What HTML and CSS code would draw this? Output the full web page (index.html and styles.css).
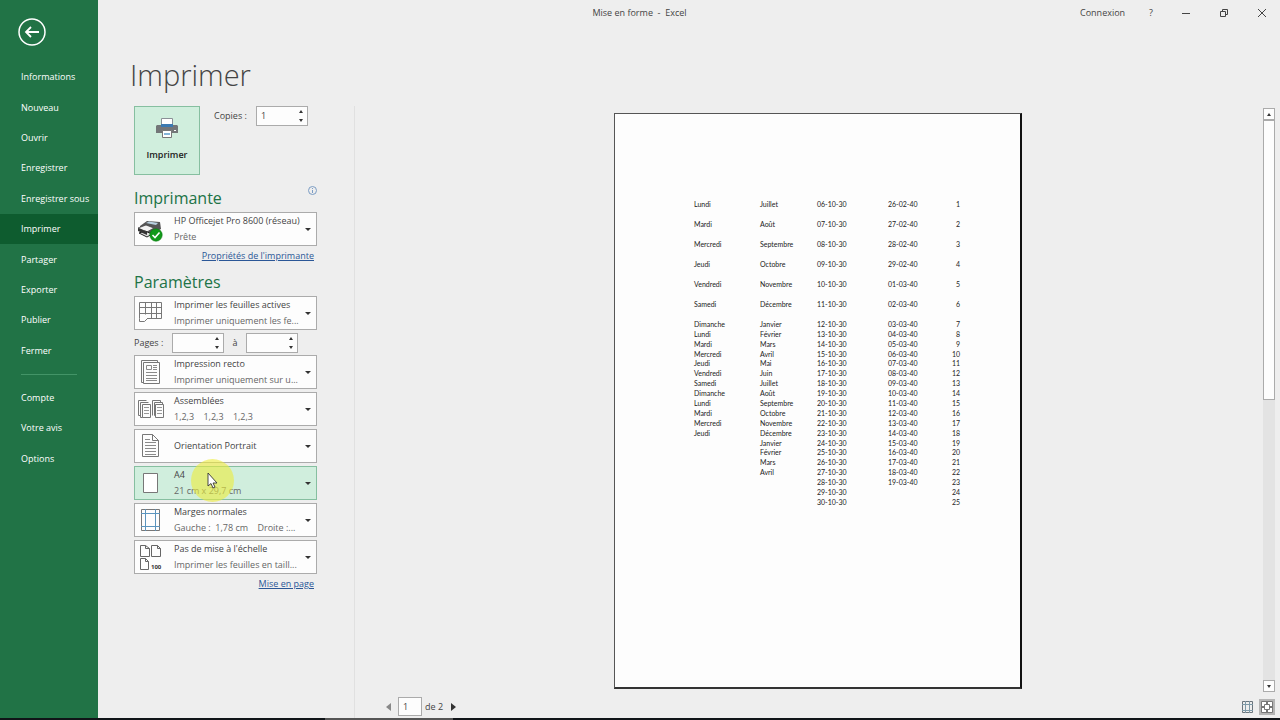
FILE: index.html
```html
<!DOCTYPE html>
<html lang="fr">
<head>
  <meta charset="UTF-8">
  <meta name="viewport" content="width=device-width, initial-scale=1.0">
  <title>Mise en forme - Excel</title>
  <link rel="stylesheet" href="styles.css">
</head>
<body>
  <div class="app">
    <nav class="sidebar">
      <button class="back" aria-label="Retour">
        <svg width="28" height="28" viewBox="0 0 28 28" fill="none" stroke="#fff">
          <circle cx="14" cy="14" r="13" stroke-width="1.5"/>
          <path d="M21 14H8M13 9l-5 5 5 5" stroke-width="1.8"/>
        </svg>
      </button>
      <ul class="menu">
        <li><a href="#">Informations</a></li>
        <li><a href="#">Nouveau</a></li>
        <li><a href="#">Ouvrir</a></li>
        <li><a href="#">Enregistrer</a></li>
        <li><a href="#">Enregistrer sous</a></li>
        <li><a href="#" class="active">Imprimer</a></li>
        <li><a href="#">Partager</a></li>
        <li><a href="#">Exporter</a></li>
        <li><a href="#">Publier</a></li>
        <li><a href="#">Fermer</a></li>
      </ul>
      <hr>
      <ul class="menu menu-bottom">
        <li><a href="#">Compte</a></li>
        <li><a href="#">Votre avis</a></li>
        <li><a href="#">Options</a></li>
      </ul>
    </nav>

    <main>
      <header class="titlebar">
        <span class="doc-title">Mise en forme &nbsp;-&nbsp; Excel</span>
        <div class="window-buttons">
          <button class="login">Connexion</button>
          <button aria-label="Aide">?</button>
          <button aria-label="Réduire">
            <svg width="10" height="10" viewBox="0 0 10 10" stroke="#444"><path d="M1 5.500h8"/></svg>
          </button>
          <button aria-label="Restaurer">
            <svg width="10" height="10" viewBox="0 0 10 10" fill="none" stroke="#444"><path d="M1.500 3.500h5v5h-5zM3.500 3.500v-2h5v5h-2"/></svg>
          </button>
          <button aria-label="Fermer">
            <svg width="10" height="10" viewBox="0 0 10 10" stroke="#444"><path d="M1 1l8 8M9 1l-8 8"/></svg>
          </button>
        </div>
      </header>
      <h1>Imprimer</h1>

      <div class="content">
        <section class="settings">
          <div class="print-row">
            <button class="print">
              <svg width="24" height="22" viewBox="0 0 24 22">
                <path d="M6.500 1.500h11V8h-11z" fill="#fff" stroke="#8a9096"/>
                <path d="M2 8h20l1 1v7H1V9z" fill="#737678"/>
                <path d="M6 7h12v3H6z" fill="#3b79b0"/>
                <path d="M19 13h2v1h-2z" fill="#fff"/>
                <path d="M7.500 13.500h9v7h-9z" fill="#fff" stroke="#777"/>
                <path d="M9 16h6v2H9z" fill="#84b4d8"/>
              </svg>
              <span>Imprimer</span>
            </button>
            <label for="copies">Copies :</label>
            <div class="spinner">
              <input id="copies" type="text" inputmode="numeric" value="1">
              <button class="up" aria-label="Plus"></button>
              <button class="down" aria-label="Moins"></button>
            </div>
          </div>

          <div class="section-head">
            <h2>Imprimante</h2>
            <svg width="9" height="9" viewBox="0 0 9 9" fill="none" stroke="#7b9cc4"><circle cx="4.500" cy="4.500" r="4"/><path d="M4.500 4v3M4.500 2v1"/></svg>
          </div>
          <button class="gallery" aria-haspopup="listbox">
            <svg width="32" height="32" viewBox="0 0 32 32">
              <path d="M5 13l7-5 13 1 1 7-9 5-12-4z" fill="#555"/>
              <path d="M11 10l3-1.500 9 1.500-2 2z" fill="#b8cfdf"/>
              <path d="M3 15l8-3 8 3-7 4z" fill="#f2f2f2" stroke="#444" stroke-width=".8"/>
              <path d="M4 20l6-2 7 3-5 3z" fill="#ddd" stroke="#222"/>
              <path d="M3 15l9 4v3l-9-4z" fill="#333"/>
              <circle cx="21" cy="22" r="6.200" fill="#11991a" stroke="#0b7a12" stroke-width=".6"/>
              <path d="M17.500 22l2.500 2.500 4.500-5" fill="none" stroke="#fff" stroke-width="1.600"/>
            </svg>
            <span class="lines"><b>HP Officejet Pro 8600 (réseau)</b><small>Prête</small></span>
          </button>
          <a class="link" href="#">Propriétés de l'imprimante</a>

          <div class="section-head params">
            <h2>Paramètres</h2>
          </div>
          <div class="galleries">
            <button class="gallery" aria-haspopup="listbox">
              <svg width="32" height="32" viewBox="0 0 32 32" fill="none" stroke="#777">
                <path d="M12 21.500h14.500v-16h-22v16M4.500 10.500h22M4.500 16.500h22M10.500 5.500v12M16.500 5.500v16M21.500 5.500v16"/>
                <path d="M4.500 21.500v3h5l3.500-3.500"/>
              </svg>
              <span class="lines"><b>Imprimer les feuilles actives</b><small>Imprimer uniquement les fe...</small></span>
            </button>
            <div class="pages">
              <label for="from">Pages :</label>
              <div class="spinner">
                <input id="from" type="text" inputmode="numeric">
                <button class="up" aria-label="Plus"></button>
                <button class="down" aria-label="Moins"></button>
              </div>
              <label for="to">à</label>
              <div class="spinner">
                <input id="to" type="text" inputmode="numeric">
                <button class="up" aria-label="Plus"></button>
                <button class="down" aria-label="Moins"></button>
              </div>
            </div>
            <button class="gallery" aria-haspopup="listbox">
              <svg width="32" height="32" viewBox="0 0 32 32" fill="none" stroke="#777">
                <path d="M8.500 26.500h-2v-22h16v2M8.500 6.500h16v21h-16z"/>
                <path d="M11.500 9.500h5v4h-5zM18 9.500h4M18 11.500h4M18 13.500h4M11 16.500h11M11 19.500h11M11 22.500h11M11 24.500h11" stroke="#8a8a8a"/>
              </svg>
              <span class="lines"><b>Impression recto</b><small>Imprimer uniquement sur u...</small></span>
            </button>
            <button class="gallery" aria-haspopup="listbox">
              <svg width="32" height="32" viewBox="0 0 32 32" fill="none" stroke="#777">
                <path d="M5.500 22.500h-2v-15h8M7.500 24.500h-2v-15h8M7.500 11.500h8v13h-8z"/>
                <path d="M17.500 22.500v-15h8v2M20.500 22.500h-1v-13h8v2M20.500 11.500h8v13h-8z"/>
                <path d="M9 14.500h5M9 17.500h5M9 20.500h5M22 14.500h5M22 17.500h5M22 20.500h5" stroke="#999"/>
              </svg>
              <span class="lines"><b>Assemblées</b><small>1,2,3 &nbsp;&nbsp; 1,2,3 &nbsp;&nbsp; 1,2,3</small></span>
            </button>
            <button class="gallery" aria-haspopup="listbox">
              <svg width="32" height="32" viewBox="0 0 32 32" fill="none" stroke="#777">
                <path d="M7.500 4.500h10l6 6v16h-16zM17.500 4.500v6h6"/>
                <path d="M10 9.500h5M10 12.500h11M10 15.500h11M10 18.500h11M10 21.500h11M10 24.500h11" stroke="#8a8a8a"/>
              </svg>
              <span class="lines"><b>Orientation Portrait</b></span>
            </button>
            <div class="hovered">
              <button class="gallery" aria-haspopup="listbox">
                <svg width="32" height="32" viewBox="0 0 32 32"><path d="M8.500 6.500h14v19h-14z" fill="#fff" stroke="#777"/></svg>
                <span class="lines"><b>A4</b><small>21 cm x 29,7 cm</small></span>
              </button>
              <div class="halo"></div>
              <svg class="cursor" width="12" height="18" viewBox="0 0 12 18">
                <path d="M1 1v13l3-2.500 2 4.500 2-1-2-4h4z" fill="#fff" stroke="#333" stroke-width=".9"/>
              </svg>
            </div>
            <button class="gallery" aria-haspopup="listbox">
              <svg width="32" height="32" viewBox="0 0 32 32" fill="none" stroke="#777">
                <path d="M6.500 5.500h18v21h-18z"/>
                <path d="M10.500 5v22M20.500 5v22M6 9.500h19M6 22.500h19" stroke="#5b94bd"/>
              </svg>
              <span class="lines"><b>Marges normales</b><small>Gauche :&nbsp; 1,78 cm &nbsp;&nbsp; Droite :...</small></span>
            </button>
            <button class="gallery" aria-haspopup="listbox">
              <svg width="32" height="32" viewBox="0 0 32 32" fill="none" stroke="#666">
                <path d="M5.500 4.500h5l4 3v8h-9zM10.500 4.500v3h4M16.500 4.500h6l3 3v8h-9zM22.500 4.500v3h3M5.500 17.500h5l3 3v8h-8zM10.500 17.500v3h3"/>
                <text x="16" y="28" class="icon-text">100</text>
              </svg>
              <span class="lines"><b>Pas de mise à l'échelle</b><small>Imprimer les feuilles en taill...</small></span>
            </button>
          </div>
          <a class="link" href="#">Mise en page</a>
        </section>

        <section class="preview">
          <div class="canvas">
            <div class="sheet">
              <table>
                <colgroup><col class="c-day"><col class="c-month"><col class="c-date"><col class="c-date2"><col class="c-num"></colgroup>
                <tr><td>Lundi</td><td>Juillet</td><td>06-10-30</td><td>26-02-40</td><td>1</td></tr>
                <tr class="tall"><td>Mardi</td><td>Août</td><td>07-10-30</td><td>27-02-40</td><td>2</td></tr>
                <tr class="tall"><td>Mercredi</td><td>Septembre</td><td>08-10-30</td><td>28-02-40</td><td>3</td></tr>
                <tr class="tall"><td>Jeudi</td><td>Octobre</td><td>09-10-30</td><td>29-02-40</td><td>4</td></tr>
                <tr class="tall"><td>Vendredi</td><td>Novembre</td><td>10-10-30</td><td>01-03-40</td><td>5</td></tr>
                <tr class="tall"><td>Samedi</td><td>Décembre</td><td>11-10-30</td><td>02-03-40</td><td>6</td></tr>
                <tr class="tall"><td>Dimanche</td><td>Janvier</td><td>12-10-30</td><td>03-03-40</td><td>7</td></tr>
                <tr><td>Lundi</td><td>Février</td><td>13-10-30</td><td>04-03-40</td><td>8</td></tr>
                <tr><td>Mardi</td><td>Mars</td><td>14-10-30</td><td>05-03-40</td><td>9</td></tr>
                <tr><td>Mercredi</td><td>Avril</td><td>15-10-30</td><td>06-03-40</td><td>10</td></tr>
                <tr><td>Jeudi</td><td>Mai</td><td>16-10-30</td><td>07-03-40</td><td>11</td></tr>
                <tr><td>Vendredi</td><td>Juin</td><td>17-10-30</td><td>08-03-40</td><td>12</td></tr>
                <tr><td>Samedi</td><td>Juillet</td><td>18-10-30</td><td>09-03-40</td><td>13</td></tr>
                <tr><td>Dimanche</td><td>Août</td><td>19-10-30</td><td>10-03-40</td><td>14</td></tr>
                <tr><td>Lundi</td><td>Septembre</td><td>20-10-30</td><td>11-03-40</td><td>15</td></tr>
                <tr><td>Mardi</td><td>Octobre</td><td>21-10-30</td><td>12-03-40</td><td>16</td></tr>
                <tr><td>Mercredi</td><td>Novembre</td><td>22-10-30</td><td>13-03-40</td><td>17</td></tr>
                <tr><td>Jeudi</td><td>Décembre</td><td>23-10-30</td><td>14-03-40</td><td>18</td></tr>
                <tr><td></td><td>Janvier</td><td>24-10-30</td><td>15-03-40</td><td>19</td></tr>
                <tr><td></td><td>Février</td><td>25-10-30</td><td>16-03-40</td><td>20</td></tr>
                <tr><td></td><td>Mars</td><td>26-10-30</td><td>17-03-40</td><td>21</td></tr>
                <tr><td></td><td>Avril</td><td>27-10-30</td><td>18-03-40</td><td>22</td></tr>
                <tr><td></td><td></td><td>28-10-30</td><td>19-03-40</td><td>23</td></tr>
                <tr><td></td><td></td><td>29-10-30</td><td></td><td>24</td></tr>
                <tr><td></td><td></td><td>30-10-30</td><td></td><td>25</td></tr>
              </table>
            </div>
            <div class="scrollbar">
              <button class="up" aria-label="Défiler vers le haut"></button>
              <div class="thumb"></div>
              <button class="down" aria-label="Défiler vers le bas"></button>
            </div>
          </div>
          <footer class="pager">
            <button class="prev" aria-label="Page précédente"></button>
            <input id="page" type="text" value="1">
            <label for="page">de 2</label>
            <button class="next" aria-label="Page suivante"></button>
            <div class="view-buttons">
              <button aria-label="Afficher les marges">
                <svg width="16" height="16" viewBox="0 0 16 16" fill="none" stroke="#6b757c"><path d="M2.500 2.500h10v11h-10z"/><path d="M5.500 2v12M9.500 2v12M2 5.500h11M2 11.500h11" stroke="#7f9aa8"/></svg>
              </button>
              <button class="pressed" aria-label="Zoom sur la page">
                <svg width="16" height="16" viewBox="0 0 16 16" fill="none" stroke="#777"><path d="M2.500 2.500h11v11h-11z" fill="#fff"/><path d="M5.500 5.500h5v5h-5z"/><path d="M8 2v3M8 11v3M2 8h3M11 8h3" stroke-width="2"/></svg>
              </button>
            </div>
          </footer>
        </section>
      </div>
    </main>
  </div>
  <div class="taskbar"><div class="task"></div></div>
</body>
</html>
```
FILE: styles.css
```css
* {
  box-sizing: border-box;
}
body {
  margin: 0;
  min-height: 100vh;
  display: flex;
  flex-direction: column;
  background: #eee;
  color: #444;
  font-family: "Open Sans", "Noto Sans", sans-serif;
  font-size: 9px;
  line-height: 16px;
}
button, input {
  font: inherit;
  color: inherit;
  margin: 0;
  padding: 0;
  border: 0;
  background: none;
}
h1, h2, ul {
  margin: 0;
  padding: 0;
  font-weight: 400;
}
svg {
  display: block;
}
.app {
  flex: 1;
  display: flex;
}

/* menu vert */
.sidebar {
  width: 98px;
  flex: none;
  padding-top: 18px;
  background: #217346;
  color: #fff;
}
.back {
  display: block;
  margin-left: 18px;
}
.menu {
  display: grid;
  grid-auto-rows: 1fr;
  height: 304px;
  margin-top: 16px;
  list-style: none;
}
.menu-bottom {
  height: 91px;
  margin-top: 8px;
}
.menu a {
  display: flex;
  align-items: center;
  height: 100%;
  padding-left: 21px;
  color: #fff;
  text-decoration: none;
  white-space: nowrap;
}
.menu a.active {
  background: #0e5c2f;
}
.sidebar hr {
  width: 56px;
  margin: 8px 0 0 21px;
  border: 0;
  border-top: 1px solid #439467;
}

main {
  flex: 1;
  display: flex;
  flex-direction: column;
  min-width: 0;
}
.titlebar {
  display: grid;
  grid-template-columns: 1fr auto 1fr;
  align-items: center;
  height: 26px;
  padding-right: 13px;
}
.doc-title {
  grid-column: 2;
  margin-right: 86px;
}
.window-buttons {
  display: flex;
  justify-content: flex-end;
  align-items: center;
  gap: 28px;
}
.window-buttons .login {
  margin-right: -4px;
}
h1 {
  padding: 28px 0 0 32px;
  font-size: 29px;
  font-weight: 300;
  line-height: 42px;
}
.content {
  flex: 1;
  display: flex;
  margin-top: 10px;
}

/* colonne des réglages */
.settings {
  width: 257px;
  flex: none;
  padding: 0 37px 0 36px;
  border-right: 1px solid #e0e0e0;
}
.print-row {
  display: flex;
  align-items: flex-start;
}
.print-row label {
  width: 42px;
  margin: 2px 0 0 14px;
}
.print {
  display: flex;
  flex-direction: column;
  align-items: center;
  gap: 8px;
  width: 66px;
  height: 69px;
  padding-top: 10px;
  border: 1px solid #86bfa0;
  background: #d0eedd;
  color: #222;
  font-weight: 600;
}
.spinner {
  display: grid;
  grid-template: 1fr 1fr / 1fr 12px;
  width: 52px;
  height: 20px;
  border: 1px solid #ababab;
  background: #fdfdfd;
}
.spinner input {
  grid-row: 1 / 3;
  width: 100%;
  padding-left: 4px;
}
.up::before, .down::before {
  content: "";
  display: block;
  width: 0;
  margin: 0 auto;
  border: 2px solid transparent;
}
.up::before {
  border-top: 0;
  border-bottom: 3px solid #333;
}
.down::before {
  border-bottom: 0;
  border-top: 3px solid #333;
}
.section-head {
  display: flex;
  justify-content: space-between;
  margin: 11px 0 2px;
}
.section-head.params {
  margin-top: 6px;
}
.section-head h2 {
  color: #217346;
  font-size: 16px;
  line-height: 24px;
}
.gallery {
  display: flex;
  align-items: center;
  width: 183px;
  height: 34px;
  padding-right: 5px;
  border: 1px solid #ababab;
  background: #fdfdfd;
  text-align: left;
}
.gallery::after {
  content: "";
  border: 3px solid transparent;
  border-top-color: #333;
  border-bottom: 0;
}
.gallery svg {
  flex: none;
  margin-right: 7px;
}
.lines {
  flex: 1;
  min-width: 0;
  white-space: nowrap;
}
.lines b, .lines small {
  display: block;
  font-size: 9px;
  font-weight: 400;
}
.lines small {
  color: #666;
}
.galleries {
  display: flex;
  flex-direction: column;
  gap: 3px;
}
.pages {
  display: flex;
  align-items: center;
  height: 19px;
}
.pages label:first-child {
  width: 38px;
}
.pages label:nth-of-type(2) {
  width: 22px;
  text-align: center;
}
.link {
  display: block;
  margin: 2px 3px 0 0;
  color: #2b5797;
  text-align: right;
}
.icon-text {
  fill: #333;
  stroke: none;
  font-size: 6px;
  font-weight: 700;
}
.hovered {
  position: relative;
}
.hovered .gallery {
  border-color: #86bfa0;
  background: #d0eedd;
}
.halo {
  position: absolute;
  left: 57px;
  top: -7px;
  width: 43px;
  height: 43px;
  border-radius: 50%;
  background: rgba(236, 236, 60, 0.6);
}
.cursor {
  position: absolute;
  left: 73px;
  top: 6px;
}

/* aperçu */
.preview {
  flex: 1;
  display: flex;
  flex-direction: column;
  min-width: 0;
}
.canvas {
  flex: 1;
  display: flex;
  padding-left: 18px;
}
.sheet {
  width: 408px;
  height: 576px;
  margin: 7px auto 0;
  padding: 85px 60px 0 79px;
  border: 1px solid #555;
  border-right: 2px solid #111;
  border-bottom: 2px solid #333;
  background: #fdfdfd;
}
table {
  width: 100%;
  height: 308px;
  table-layout: fixed;
  border-collapse: collapse;
  color: #222;
  font-family: Lato, "Open Sans", sans-serif;
  font-size: 7px;
  line-height: 9px;
}
td {
  padding: 0;
  vertical-align: bottom;
}
td:last-child {
  text-align: right;
}
.tall {
  height: 20px;
}
.c-day { width: 66px; }
.c-month { width: 57px; }
.c-date { width: 71px; }
.c-date2 { width: 50px; }
.scrollbar {
  display: flex;
  flex-direction: column;
  width: 12px;
  margin: 2px 5px 0 0;
  background: #e3e3e3;
}
.scrollbar button {
  height: 12px;
  border: 1px solid #ababab;
  background: #fdfdfd;
}
.thumb {
  height: 280px;
  margin-bottom: auto;
  border: 1px solid #ababab;
  background: #fdfdfd;
}
.pager {
  display: flex;
  align-items: center;
  height: 26px;
  padding: 3px 5px 0 31px;
}
.pager input {
  width: 24px;
  height: 19px;
  margin: 0 3px 0 7px;
  padding-left: 4px;
  border: 1px solid #ababab;
  background: #fdfdfd;
}
.prev::before, .next::before {
  content: "";
  display: block;
  border: 4px solid transparent;
}
.prev::before {
  border-left: 0;
  border-right: 5px solid #888;
}
.next {
  margin-left: 8px;
}
.next::before {
  border-right: 0;
  border-left: 5px solid #333;
}
.view-buttons {
  display: flex;
  gap: 3px;
  margin-left: auto;
}
.view-buttons .pressed {
  background: #b5b5b5;
}

.taskbar {
  height: 2px;
  padding-left: 325px;
  background: #101418;
}
.task {
  width: 128px;
  height: 2px;
  background: #555;
}
```
